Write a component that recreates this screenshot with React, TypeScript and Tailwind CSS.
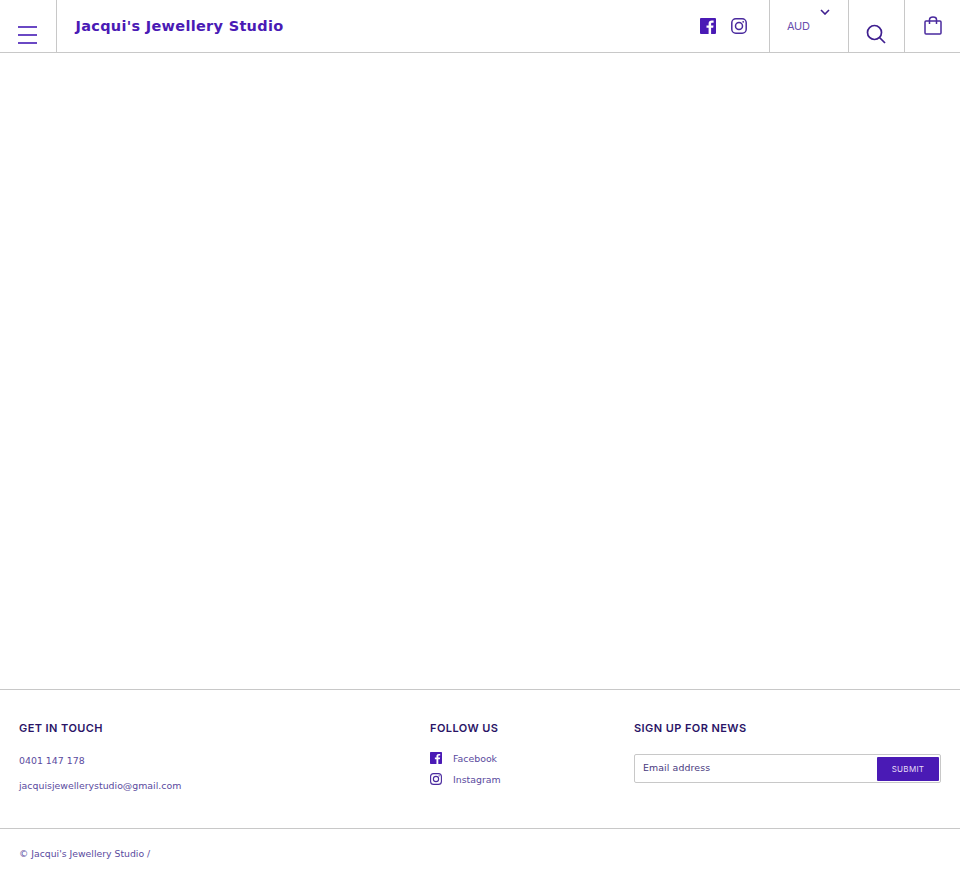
import React from "react";

const dejavu = "font-['DejaVu_Sans',sans-serif]";

function FacebookIcon({ className }: { className: string }) {
  return (
    <svg viewBox="0 0 16 16" className={className}>
      <path
        fill="#4a1ab5"
        d="M0.9 0H15.1C15.6 0 16 .4 16 .9V15.1C16 15.6 15.6 16 15.1 16H11.1V9.8H13.2L13.5 7.4H11.1V5.9C11.1 5.2 11.3 4.7 12.3 4.7H13.6V2.6C13.4 2.6 12.6 2.5 11.7 2.5 9.9 2.5 8.6 3.6 8.6 5.7V7.4H6.5V9.8H8.6V16H.9C.4 16 0 15.6 0 15.1V.9C0 .4 .4 0 .9 0Z"
      />
    </svg>
  );
}

function InstagramIcon({ className }: { className: string }) {
  return (
    <svg viewBox="0 0 16 16" fill="none" stroke="#4a2a9e" className={className}>
      <rect x="0.8" y="0.8" width="14.4" height="14.4" rx="4" strokeWidth="1.5" />
      <circle cx="8" cy="8" r="3.5" strokeWidth="1.5" />
      <circle cx="12.2" cy="3.8" r="0.9" fill="#4a2a9e" stroke="none" />
    </svg>
  );
}

function Header() {
  return (
    <header className="flex h-[53px] items-stretch border-b border-[#c8c8c8] bg-white text-[#4a1ab5]">
      <div className="flex w-[57px] shrink-0 items-end border-r border-[#c8c8c8] pb-[8px] pl-[18px]">
        <div className="flex w-[19px] flex-col gap-[6px]">
          <span className="h-[2px] bg-[#6a48c4]" />
          <span className="h-[2px] bg-[#6a48c4]" />
          <span className="h-[2px] bg-[#6a48c4]" />
        </div>
      </div>
      <div className={`flex flex-1 items-center pl-[18.5px] pt-[1px] text-[14.5px] font-bold tracking-[0.3px] ${dejavu}`}>
        Jacqui's Jewellery Studio
      </div>
      <div className="flex items-center gap-[15px] pr-[22px]">
        <FacebookIcon className="h-[16px] w-[16px]" />
        <InstagramIcon className="h-[16px] w-[16px]" />
      </div>
      <div className="relative flex w-[79px] shrink-0 items-center border-l border-[#c8c8c8] pl-[17px] font-['Inter',sans-serif] text-[11px] tracking-[-0.3px] text-[#6a4fae]">
        AUD
        <svg viewBox="0 0 10 6" fill="none" stroke="#3f1f8f" strokeWidth="1.6" className="absolute left-[50px] top-[9px] h-[6px] w-[10px]">
          <path d="M1 1l4 4 4-4" />
        </svg>
      </div>
      <div className="flex w-[56px] shrink-0 items-end justify-center border-l border-[#c8c8c8] pb-[8px] pr-[2px]">
        <svg viewBox="0 0 20 20" fill="none" stroke="#3f1f8f" strokeWidth="1.7" className="h-[20px] w-[20px]">
          <circle cx="8.5" cy="8.5" r="7" />
          <path d="M13.5 13.5l5.5 5.5" />
        </svg>
      </div>
      <div className="flex w-[56px] shrink-0 items-start justify-center border-l border-[#c8c8c8] pt-[16px]">
        <svg viewBox="0 0 18 19" fill="none" stroke="#4a2a9e" strokeWidth="1.5" className="h-[19px] w-[18px]">
          <rect x="1" y="5" width="16" height="13" rx="1" />
          <path d="M5.5 8V3.5C5.5 1.8 6.8 1 9 1s3.5.8 3.5 2.5V8" />
        </svg>
      </div>
    </header>
  );
}

function FooterHeading({ children }: { children: React.ReactNode }) {
  return <h3 className="font-['Inter',sans-serif] text-[11px] font-semibold leading-[14px] tracking-[0.42px] text-[#2a1466]">{children}</h3>;
}

function Footer() {
  return (
    <footer className={`border-t border-[#c8c8c8] bg-white text-[9.4px] text-[#5a4a9e] ${dejavu}`}>
      <div className="flex h-[139px] border-b border-[#c8c8c8] pt-[31px]">
        <div className="w-[430px] shrink-0 pl-[19px]">
          <FooterHeading>GET IN TOUCH</FooterHeading>
          <p className="mt-[19px] leading-[14px]">0401 147 178</p>
          <p className="mt-[11px] leading-[14px]">jacquisjewellerystudio@gmail.com</p>
        </div>
        <div className="w-[204px] shrink-0">
          <FooterHeading>FOLLOW US</FooterHeading>
          <div className="mt-[16px] flex items-center gap-[11px] leading-[14px]">
            <FacebookIcon className="h-[12px] w-[12px]" />
            <span className="translate-y-[0.5px]">Facebook</span>
          </div>
          <div className="mt-[7px] flex items-center gap-[11px] leading-[14px]">
            <InstagramIcon className="h-[12px] w-[12px]" />
            <span className="translate-y-[0.5px]">Instagram</span>
          </div>
        </div>
        <div className="w-[307px] shrink-0">
          <FooterHeading>SIGN UP FOR NEWS</FooterHeading>
          <div className="mt-[19px] flex h-[29px] items-center justify-between rounded-[2px] border border-[#c8c8c8] pl-[8px] pr-px">
            <span className="tracking-[0.1px] text-[#4a3a80]">Email address</span>
            <button className="flex h-[24px] w-[62px] items-center justify-center rounded-[1px] bg-[#4a1ab5] font-['Inter',sans-serif] text-[8px] tracking-[0.3px] text-[#e6dcf5]">
              SUBMIT
            </button>
          </div>
        </div>
      </div>
      <p className="pl-[19px] pt-[18px] text-[9.3px] leading-[14px]">© Jacqui's Jewellery Studio /</p>
    </footer>
  );
}

export default function App() {
  return (
    <div className="flex min-h-[878px] flex-col bg-white">
      <Header />
      <main className="h-[636px]" />
      <Footer />
    </div>
  );
}
